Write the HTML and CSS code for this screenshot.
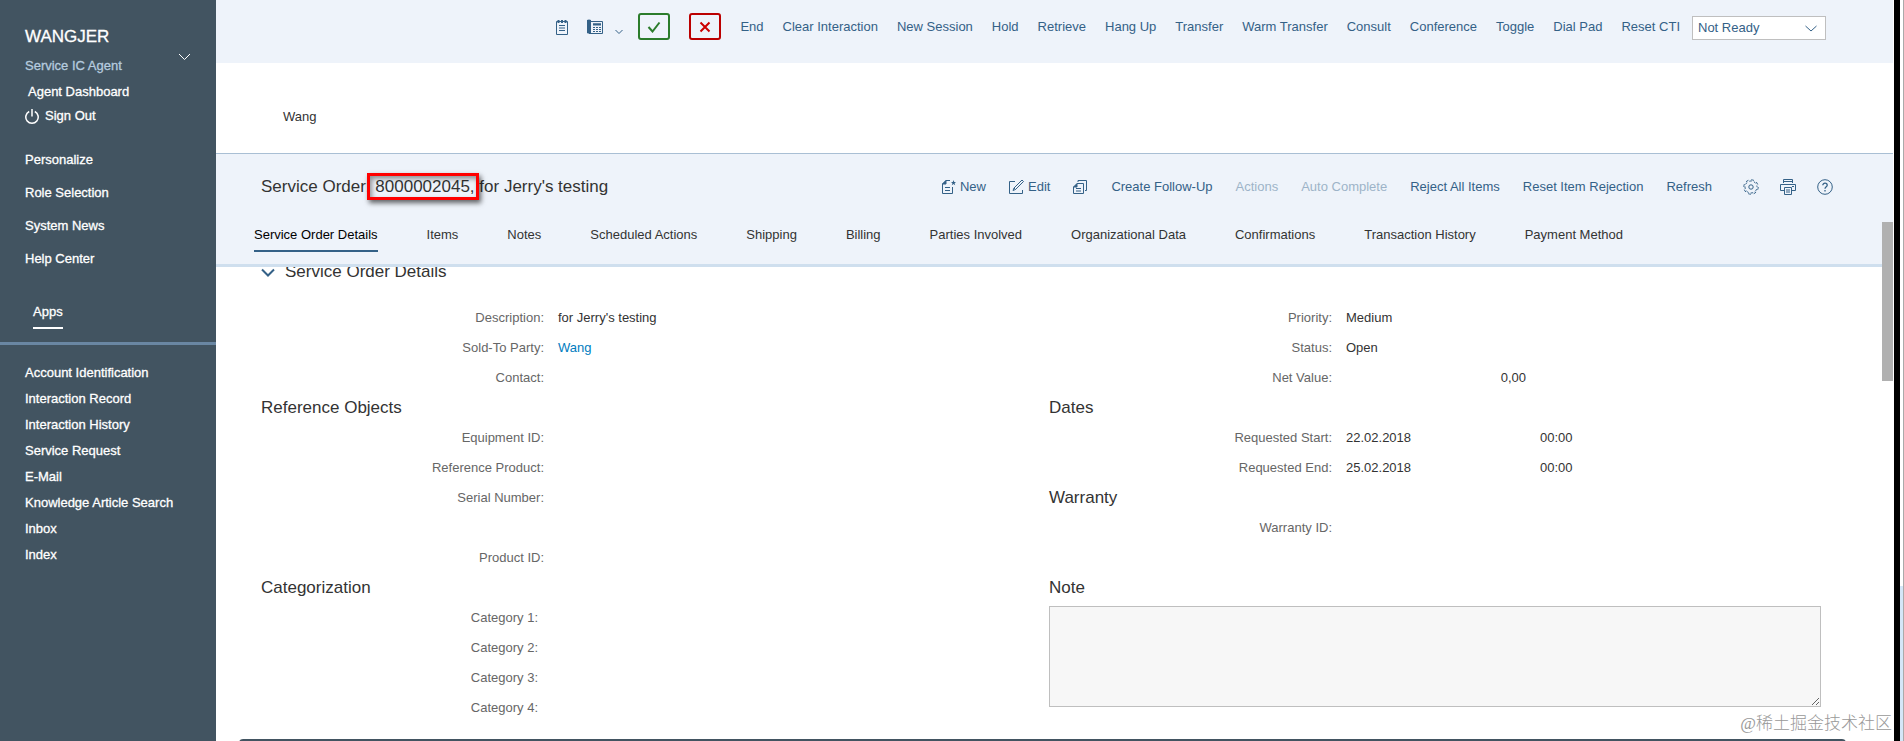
FILE: index.html
```html
<!DOCTYPE html>
<html lang="en">
  <head>
    <meta charset="utf-8">
    <title>Service Order: 8000002045</title>
    <link rel="stylesheet" href="styles.css">
  </head>
  <body>
    <aside class="sidebar">
      <div class="user">
        <div>
          <h2 class="user-name">WANGJER</h2>
          <p class="user-role">Service IC Agent</p>
        </div>
        <button class="user-toggle" aria-label="Toggle user menu">
          <svg width="13" height="8" viewBox="0 0 13 8"><path d="M1 1l5.500 5.500L12 1"/></svg>
        </button>
      </div>
      <ul class="user-links">
        <li><a class="dashboard" href="#">Agent Dashboard</a></li>
        <li>
          <a href="#">
            <svg width="14" height="16" viewBox="0 0 14 16"><path d="M4.200 3.500a6.200 6.200 0 1 0 5.600 0M7 1v7.500" stroke-width="1.500"/></svg>
            Sign Out
          </a>
        </li>
      </ul>
      <ul class="system-links">
        <li><a href="#">Personalize</a></li>
        <li><a href="#">Role Selection</a></li>
        <li><a href="#">System News</a></li>
        <li><a href="#">Help Center</a></li>
      </ul>
      <div class="apps"><a href="#">Apps</a></div>
      <ul class="app-links">
        <li><a href="#">Account Identification</a></li>
        <li><a href="#">Interaction Record</a></li>
        <li><a href="#">Interaction History</a></li>
        <li><a href="#">Service Request</a></li>
        <li><a href="#">E-Mail</a></li>
        <li><a href="#">Knowledge Article Search</a></li>
        <li><a href="#">Inbox</a></li>
        <li><a href="#">Index</a></li>
      </ul>
    </aside>

    <main>
      <div class="toolbar">
        <button aria-label="Scratch pad">
          <svg width="12" height="16" viewBox="0 0 12 16">
            <path d="M.5 2.500h11v13H.5zM3 6.500h6M3 9h6M3 11.500h6"/>
            <path d="M2.500 1v3M6 1v3M9.500 1v3" stroke-width="2"/>
          </svg>
        </button>
        <div class="phone">
          <button aria-label="Phone">
            <svg width="16" height="16" viewBox="0 0 16 16">
              <path class="fill" d="M0 1q2-1 4 0v13q-2 1-4 0z"/>
              <path d="M4 2.500h11.500v12H2M6 5h8" />
              <path d="M6 5.500h8" stroke-width="2"/>
              <path d="M6 8.500h8M6 10.500h8M6 12.500h8" stroke-dasharray="2 1"/>
            </svg>
          </button>
          <button class="phone-menu" aria-label="Phone options">
            <svg width="8" height="6" viewBox="0 0 8 6"><path d="M.5 1L4 4.500 7.500 1"/></svg>
          </button>
        </div>
        <button class="accept" aria-label="Accept">
          <svg width="14" height="12" viewBox="0 0 14 12"><path d="M1.500 6l4 4.500L12.500 1.500"/></svg>
        </button>
        <button class="reject" aria-label="Reject">
          <svg width="12" height="12" viewBox="0 0 12 12"><path d="M1.500 1.500l9 9M10.500 1.500l-9 9"/></svg>
        </button>
        <button>End</button>
        <button>Clear Interaction</button>
        <button>New Session</button>
        <button>Hold</button>
        <button>Retrieve</button>
        <button>Hang Up</button>
        <button>Transfer</button>
        <button>Warm Transfer</button>
        <button>Consult</button>
        <button>Conference</button>
        <button>Toggle</button>
        <button>Dial Pad</button>
        <button>Reset CTI</button>
        <div class="status">
          <select aria-label="Agent status">
            <option>Not Ready</option>
          </select>
          <svg width="12" height="7" viewBox="0 0 12 7"><path d="M.5 1L6 6l5.500-5"/></svg>
        </div>
      </div>

      <div class="account">Wang</div>

      <header class="order-header">
        <div class="title-row">
          <h1>Service Order: <span class="order-id">8000002045,</span> for Jerry's testing</h1>
          <div class="actions">
            <button>
              <svg width="15" height="16" viewBox="0 0 15 16">
                <path d="M9 1.500H5L1.500 5v9.500h10V8M1.500 5H5V1.500M4 8.500h5M4 11.500h5"/>
                <path class="fill" d="M1 5l4-4v4zM12.500 1l.7 2h1.800l-1.400 1.200.6 2-1.700-1.200-1.700 1.200.6-2L10 3h1.800z"/>
              </svg>
              New
            </button>
            <button>
              <svg width="15" height="16" viewBox="0 0 15 16">
                <path d="M6 2.500H.5v12h13V11M13 1l1.500 1.500-8 8-2.500 1 1-2.500zM5 9l1.500 1.500"/>
              </svg>
              Edit
            </button>
            <button aria-label="Copy">
              <svg width="15" height="16" viewBox="0 0 15 16">
                <path d="M4 4.500h6.500v10H.5V8zM.5 8H4V4.500M3 9.500h5M3 12h5M5 3V1.500h8.500v10H12"/>
                <path class="fill" d="M.5 8L4 4.500V8z"/>
              </svg>
            </button>
            <button>Create Follow-Up</button>
            <button disabled>Actions</button>
            <button disabled>Auto Complete</button>
            <button>Reject All Items</button>
            <button>Reset Item Rejection</button>
            <button>Refresh</button>
            <div class="tools">
              <button aria-label="Settings">
                <svg width="16" height="16" viewBox="0 0 16 16">
                  <circle cx="8" cy="8" r="7.200" stroke-dasharray="2.800 2.855"/>
                  <circle cx="8" cy="8" r="6" stroke-dasharray="2.550 2.162" stroke-dashoffset="-2.260"/>
                  <circle cx="8" cy="8" r="2.200"/>
                </svg>
              </button>
              <button aria-label="Print">
                <svg width="16" height="16" viewBox="0 0 16 16">
                  <path d="M3.500 4V.5h9V4M3.500 2.500h9M4 11.500H.5v-6h15v6H12M4.500 8.500h7v7h-7zM6 11h4M6 13h4M12 7.500h2"/>
                </svg>
              </button>
              <button aria-label="Help">
                <svg width="16" height="16" viewBox="0 0 16 16">
                  <circle cx="8" cy="8" r="7.300"/>
                  <path d="M5.800 6.300C5.800 3.300 10.200 3.500 10.200 6.200 10.200 7.700 8 7.800 8 9.800M8 11v1.500" stroke-width="1.300"/>
                </svg>
              </button>
            </div>
          </div>
        </div>
        <nav class="tabs">
          <a class="active" href="#">Service Order Details</a>
          <a href="#">Items</a>
          <a href="#">Notes</a>
          <a href="#">Scheduled Actions</a>
          <a href="#">Shipping</a>
          <a href="#">Billing</a>
          <a href="#">Parties Involved</a>
          <a href="#">Organizational Data</a>
          <a href="#">Confirmations</a>
          <a href="#">Transaction History</a>
          <a href="#">Payment Method</a>
        </nav>
      </header>

      <div class="content">
        <div class="section-title">
          <button aria-label="Collapse section">
            <svg width="14" height="9" viewBox="0 0 14 9"><path d="M1 1.500l6 6 6-6"/></svg>
          </button>
          <h2>Service Order Details</h2>
        </div>
        <div class="form">
          <div class="column">
            <dl>
              <div class="field"><dt>Description:</dt><dd>for Jerry's testing</dd></div>
              <div class="field"><dt>Sold-To Party:</dt><dd><a href="#">Wang</a></dd></div>
              <div class="field"><dt>Contact:</dt><dd></dd></div>
            </dl>
            <h3>Reference Objects</h3>
            <dl>
              <div class="field"><dt>Equipment ID:</dt><dd></dd></div>
              <div class="field"><dt>Reference Product:</dt><dd></dd></div>
              <div class="field"><dt>Serial Number:</dt><dd></dd></div>
              <div class="field spaced"><dt>Product ID:</dt><dd></dd></div>
            </dl>
            <h3>Categorization</h3>
            <dl class="categories">
              <div class="field"><dt>Category 1:</dt><dd></dd></div>
              <div class="field"><dt>Category 2:</dt><dd></dd></div>
              <div class="field"><dt>Category 3:</dt><dd></dd></div>
              <div class="field"><dt>Category 4:</dt><dd></dd></div>
            </dl>
          </div>
          <div class="column">
            <dl>
              <div class="field"><dt>Priority:</dt><dd>Medium</dd></div>
              <div class="field"><dt>Status:</dt><dd>Open</dd></div>
              <div class="field"><dt>Net Value:</dt><dd class="amount">0,00</dd></div>
            </dl>
            <h3>Dates</h3>
            <dl>
              <div class="field"><dt>Requested Start:</dt><dd>22.02.2018</dd><dd>00:00</dd></div>
              <div class="field"><dt>Requested End:</dt><dd>25.02.2018</dd><dd>00:00</dd></div>
            </dl>
            <h3>Warranty</h3>
            <dl>
              <div class="field"><dt>Warranty ID:</dt><dd></dd></div>
            </dl>
            <h3 class="spaced"><label for="note">Note</label></h3>
            <textarea id="note" readonly></textarea>
          </div>
        </div>
        <div class="next-section"></div>
      </div>
      <div class="scroll-thumb"></div>
      <div class="watermark">@稀土掘金技术社区</div>
    </main>
    <div class="window-edge"></div>
  </body>
</html>
```

FILE: styles.css
```css
:root {
  --sidebar: #425461;
  --bar: #eef3fa;
  --blue: #346187;
  --text: #333;
  --label: #666;
}

* {
  box-sizing: border-box;
}

body {
  margin: 0;
  display: flex;
  height: 100vh;
  overflow: hidden;
  background: #fff;
  color: var(--text);
  font: 13px/16px "Liberation Sans", Arial, sans-serif;
}

h1, h2, h3, p, ul, dl, dd {
  margin: 0;
  padding: 0;
  font-weight: normal;
}

ul {
  list-style: none;
}

a {
  color: inherit;
  text-decoration: none;
}

button {
  display: flex;
  align-items: center;
  gap: 4px;
  padding: 0;
  border: none;
  background: none;
  color: var(--blue);
  font: inherit;
  white-space: nowrap;
  cursor: pointer;
}

button:disabled {
  color: #9db3c8;
  cursor: default;
}

svg {
  display: block;
  flex: none;
  fill: none;
  stroke: currentColor;
}

svg .fill {
  fill: currentColor;
  stroke: none;
}

/* sidebar */
.sidebar {
  flex: none;
  width: 216px;
  background: var(--sidebar);
  color: #fff;
  -webkit-text-stroke: 0.3px;
}

.user {
  display: flex;
  justify-content: space-between;
  align-items: center;
  padding: 27px 25px 0;
}

.user-name {
  font-size: 17px;
  line-height: 20px;
}

.user-role {
  margin-top: 11px;
  color: #b5cbdf;
}

.user-toggle {
  color: #fff;
  margin-top: 12px;
}

.user-links {
  padding: 6px 25px 0;
  line-height: 24px;
}

.user-links a {
  display: flex;
  align-items: center;
  gap: 6px;
}

.user-links .dashboard {
  padding-left: 3px;
}

.system-links {
  padding: 15px 25px 0;
  line-height: 33px;
}

.apps {
  padding: 29px 33px 13px;
  border-bottom: 3px solid #6a87a3;
}

.apps a {
  display: inline-block;
  padding-bottom: 7px;
  border-bottom: 2px solid #fff;
}

.app-links {
  padding: 15px 25px;
  line-height: 26px;
}

/* main area */
main {
  flex: 1;
  min-width: 0;
  position: relative;
  display: flex;
  flex-direction: column;
  overflow: hidden;
}

.toolbar {
  flex: none;
  display: flex;
  justify-content: flex-end;
  gap: 19px;
  height: 63px;
  padding: 13px 67px 0 0;
  background: var(--bar);
}

.toolbar button {
  height: 27px;
}

.phone {
  display: flex;
  gap: 12px;
}

.toolbar .phone-menu {
  padding-top: 10px;
  margin-right: -4px;
}

.toolbar .accept,
.toolbar .reject {
  justify-content: center;
  width: 32px;
  border: 2px solid #2b7c2b;
  border-radius: 3px;
  color: #2b7c2b;
  stroke-width: 2px;
}

.toolbar .reject {
  border-color: #b00;
  color: #c00;
}

.status {
  position: relative;
  margin: 3px 0 0 -7px;
}

.status select {
  appearance: none;
  width: 134px;
  height: 24px;
  padding: 0 5px;
  border: 1px solid #bfbfbf;
  border-radius: 0;
  background: #fff;
  color: var(--blue);
  font: inherit;
}

.status svg {
  position: absolute;
  right: 9px;
  top: 9px;
  color: var(--blue);
  pointer-events: none;
}

.account {
  flex: none;
  height: 90px;
  padding: 46px 67px 0;
}

.order-header {
  flex: none;
  border-top: 1px solid #a9bfd4;
  border-bottom: 3px solid #cfdfee;
  background: var(--bar);
}

.title-row {
  display: flex;
  justify-content: space-between;
  align-items: center;
  height: 66px;
  padding: 0 60px 0 45px;
}

h1, h3,
.section-title h2 {
  font-size: 17px;
  line-height: 20px;
}

h1 {
  white-space: nowrap;
}

/* red frame round the order number */
.order-id {
  position: relative;
}

.order-id::after {
  content: "";
  position: absolute;
  inset: -4px -4px -4px -8px;
  border: 3px solid #f00;
  box-shadow: 2px 3px 5px rgba(0, 0, 0, 0.6), inset 2px 3px 5px rgba(0, 0, 0, 0.4);
}

.actions {
  display: flex;
  align-items: center;
  gap: 23px;
}

.tools {
  display: flex;
  gap: 21px;
  margin-left: 8px;
}

.tabs {
  display: flex;
  gap: 49px;
  height: 44px;
  padding: 7px 38px 0;
  white-space: nowrap;
}

.tabs a {
  height: 25px;
}

.tabs .active {
  color: #000;
  border-bottom: 2px solid var(--blue);
}

/* order details */
.content {
  flex: 1;
  min-height: 0;
  overflow: hidden;
}

.section-title {
  display: flex;
  align-items: center;
  gap: 10px;
  height: 30px;
  margin-top: -10px;
  padding-left: 45px;
}

.section-title svg {
  stroke-width: 2px;
}

.form {
  display: grid;
  grid-template-columns: 1fr 1fr;
  gap: 16px;
  padding: 16px 72px 16px 45px;
}

h3 {
  line-height: 30px;
}

.field {
  display: grid;
  grid-template-columns: 283px 180px 1fr;
  gap: 14px;
  height: 30px;
  line-height: 30px;
}

.spaced {
  margin-top: 30px;
}

.field dt {
  color: var(--label);
  text-align: right;
}

.field a {
  color: #007cc0;
}

.categories dt {
  padding-right: 6px;
}

.field .amount {
  text-align: right;
}

textarea {
  display: block;
  width: 100%;
  height: 101px;
  margin-top: 3px;
  border: 1px solid #bfbfbf;
  background: #f7f7f7;
  font: inherit;
}

.next-section {
  height: 40px;
  margin: 0 47px 0 23px;
  border-top: 2px solid var(--sidebar);
  border-radius: 4px 4px 0 0;
}

.scroll-thumb {
  position: absolute;
  top: 222px;
  right: 0;
  width: 11px;
  height: 159px;
  background: #b0b0b0;
}

.watermark {
  position: absolute;
  right: 1px;
  bottom: 5px;
  color: #999;
  font: 300 17px/24px "Liberation Serif", "Noto Sans CJK SC", sans-serif;
  white-space: nowrap;
}

.window-edge {
  flex: none;
  width: 11px;
  border-left: 1px solid #fff;
  border-right: 1px solid #aaa;
  background: linear-gradient(to right, #000 6px, transparent 6px), linear-gradient(#fff 586px, #d5e6f8 586px);
}
```
